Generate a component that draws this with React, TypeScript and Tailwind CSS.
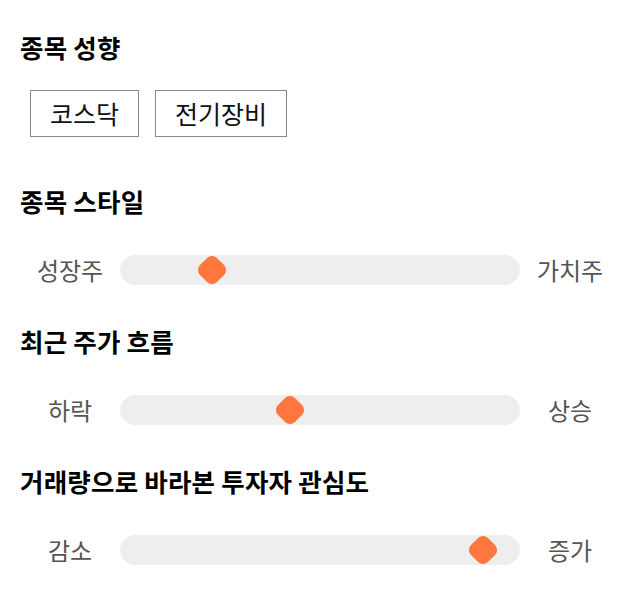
import type { ReactNode } from "react";

type Range = { title: string; left: string; right: string; pos: number };

const TAGS = ["코스닥", "전기장비"];

const RANGES: Range[] = [
  { title: "종목 스타일", left: "성장주", right: "가치주", pos: 23 },
  { title: "최근 주가 흐름", left: "하락", right: "상승", pos: 42.5 },
  { title: "거래량으로 바라본 투자자 관심도", left: "감소", right: "증가", pos: 90.75 },
];

function Heading({ children }: { children: ReactNode }) {
  return (
    <h2 className="text-[25.5px] leading-[32px] font-bold text-black tracking-[0.2px]">
      {children}
    </h2>
  );
}

function RangeRow({ left, right, pos }: Omit<Range, "title">) {
  return (
    <div className="flex items-center">
      <span className="w-[100px] text-center text-[24px] leading-[30px] text-[#555]">{left}</span>
      <div className="relative h-[30px] w-[400px] rounded-full bg-[#eeeeee]">
        <div
          className="absolute top-1/2 h-[24px] w-[24px] -translate-x-1/2 -translate-y-1/2 rotate-45 rounded-[7px] bg-[#ff773e]"
          style={{ left: `${pos}%` }}
        />
      </div>
      <span className="w-[100px] text-center text-[24px] leading-[30px] text-[#555]">{right}</span>
    </div>
  );
}

export default function App() {
  return (
    <div
      className="min-h-[606px] w-[640px] bg-white px-5 pt-[31px]"
      style={{ fontFamily: '"Noto Sans CJK KR", "Noto Sans", sans-serif' }}
    >
      <section>
        <Heading>종목 성향</Heading>
        <div className="mt-[27px] ml-[10px] flex gap-4">
          {TAGS.map((t) => (
            <span
              key={t}
              className="h-[47px] border border-[#888] px-[19px] text-[25px] leading-[45px] text-[#111]"
            >
              {t}
            </span>
          ))}
        </div>
      </section>

      {RANGES.map((r, i) => (
        <section key={r.title} className={i === 0 ? "mt-[48px]" : "mt-[40px]"}>
          <Heading>{r.title}</Heading>
          <div className="mt-[38px]">
            <RangeRow left={r.left} right={r.right} pos={r.pos} />
          </div>
        </section>
      ))}
    </div>
  );
}
